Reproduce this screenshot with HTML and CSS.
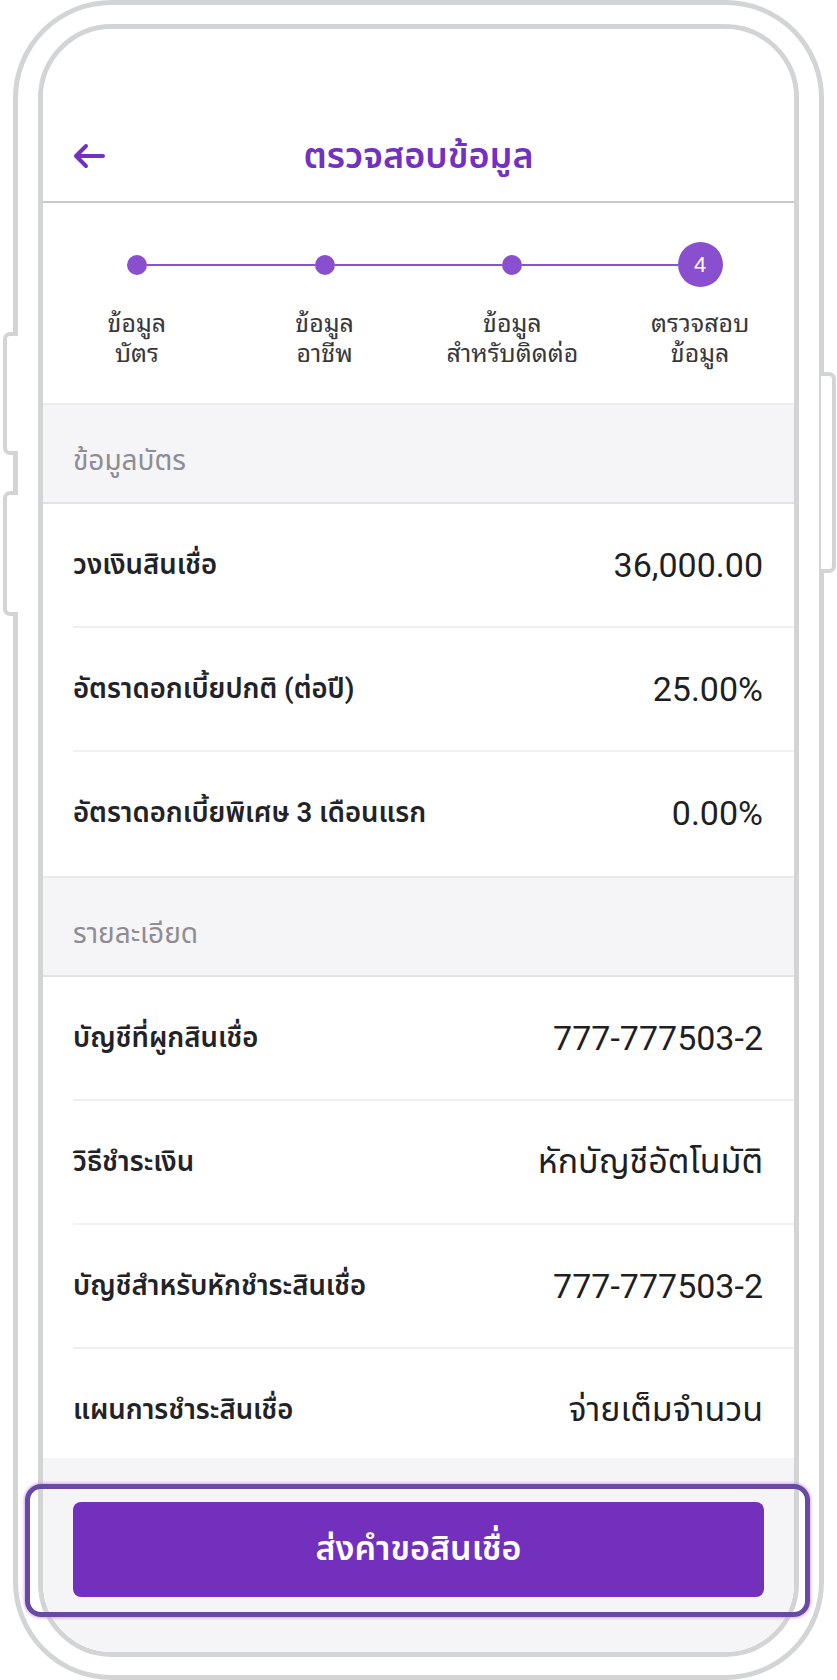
FILE: index.html
```html
<!DOCTYPE html>
<html lang="th">
<head>
    <meta charset="UTF-8">
    <meta name="viewport" content="width=device-width, initial-scale=1.0">
    <title>ตรวจสอบข้อมูล</title>
    <link rel="stylesheet" href="styles.css">
</head>
<body>
    <div class="device">
        <span class="side-btn side-left first"></span>
        <span class="side-btn side-left second"></span>
        <span class="side-btn side-right"></span>

        <div class="frame">
            <div class="screen">
                <div class="content">
                    <div class="status"></div>
                    <div class="nav">
                        <svg class="back" width="34" height="26" viewBox="0 0 34 26">
                            <path d="M31 13 H4 M14 3 L4 13 L14 23" fill="none" stroke="#7331c1" stroke-width="4" stroke-linecap="round" stroke-linejoin="round"/>
                        </svg>
                        <h1 class="title">ตรวจสอบข้อมูล</h1>
                    </div>

                    <div class="stepper">
                        <div class="step first">
                            <div class="marker"><span class="line"></span><span class="dot"></span><span class="line"></span></div>
                            <p class="step-label"><span>ข้อมูล</span><span>บัตร</span></p>
                        </div>
                        <div class="step">
                            <div class="marker"><span class="line"></span><span class="dot"></span><span class="line"></span></div>
                            <p class="step-label"><span>ข้อมูล</span><span>อาชีพ</span></p>
                        </div>
                        <div class="step">
                            <div class="marker"><span class="line"></span><span class="dot"></span><span class="line"></span></div>
                            <p class="step-label"><span>ข้อมูล</span><span>สำหรับติดต่อ</span></p>
                        </div>
                        <div class="step last">
                            <div class="marker"><span class="line"></span><span class="dot current">4</span><span class="line"></span></div>
                            <p class="step-label"><span>ตรวจสอบ</span><span>ข้อมูล</span></p>
                        </div>
                    </div>

                    <div class="group-title">ข้อมูลบัตร</div>
                    <div class="row"><span class="label">วงเงินสินเชื่อ</span><span class="value">36,000.00</span></div>
                    <div class="row"><span class="label">อัตราดอกเบี้ยปกติ (ต่อปี)</span><span class="value">25.00%</span></div>
                    <div class="row last"><span class="label">อัตราดอกเบี้ยพิเศษ 3 เดือนแรก</span><span class="value">0.00%</span></div>

                    <div class="group-title">รายละเอียด</div>
                    <div class="row"><span class="label">บัญชีที่ผูกสินเชื่อ</span><span class="value">777-777503-2</span></div>
                    <div class="row"><span class="label">วิธีชำระเงิน</span><span class="value">หักบัญชีอัตโนมัติ</span></div>
                    <div class="row"><span class="label">บัญชีสำหรับหักชำระสินเชื่อ</span><span class="value">777-777503-2</span></div>
                    <div class="row last"><span class="label">แผนการชำระสินเชื่อ</span><span class="value">จ่ายเต็มจำนวน</span></div>
                </div>

                <div class="footer">
                    <button type="button" class="submit">ส่งคำขอสินเชื่อ</button>
                </div>
            </div>
        </div>

        <div class="highlight"></div>
    </div>
</body>
</html>
```

FILE: styles.css
```css
body {
    margin: 0;
    background: #fff;
    font-family: Roboto, "Noto Sans Thai", "Noto Sans Thai UI", "Sarabun", "Loma", "Garuda", "Liberation Sans", sans-serif;
    color: #222226;
}
.device {
    position: relative;
    box-sizing: border-box;
    margin-left: 13px;
    width: 811px;
    height: 1680px;
    border: 5px solid #d3d4d6;
    border-radius: 98px;
    padding: 19px 0 0 20px;
}
.side-btn {
    position: absolute;
    width: 11px;
    background: #fff;
    border: 4px solid #d3d4d6;
}
.side-left {
    left: -15px;
    border-right: none;
    border-radius: 7px 0 0 7px;
}
.side-left.first { top: 327px; height: 115px; }
.side-left.second { top: 486px; height: 117px; }
.side-right {
    right: -17px;
    top: 367px;
    height: 193px;
    border-left: none;
    border-radius: 0 7px 7px 0;
}
.frame {
    box-sizing: border-box;
    width: 761px;
    height: 1633px;
    border: 5px solid #d3d4d6;
    border-radius: 74px;
    overflow: hidden;
}
.screen {
    display: flex;
    flex-direction: column;
    height: 100%;
    background: #fff;
}
.content {
    flex: 1;
    overflow: hidden;
}
.status { height: 83px; }
.nav {
    display: flex;
    align-items: center;
    justify-content: center;
    position: relative;
    height: 89px;
    border-bottom: 2px solid #c9c8cd;
}
.back {
    position: absolute;
    left: 29px;
    top: 31px;
}
.title {
    margin: 0;
    font-size: 36px;
    font-weight: 600;
    color: #7331c1;
}

/* stepper */
.stepper {
    display: grid;
    grid-template-columns: repeat(4, 1fr);
    padding: 39px 0 37px;
}
.marker {
    display: flex;
    align-items: center;
    height: 45px;
}
.line {
    flex: 1;
    height: 2px;
    background: #8b52cf;
}
.first .line:first-child,
.last .line:last-child { background: transparent; }
.dot {
    width: 20px;
    height: 20px;
    border-radius: 50%;
    background: #8a4fcf;
}
.dot.current {
    width: 45px;
    height: 45px;
    display: flex;
    align-items: center;
    justify-content: center;
    color: #fff;
    font-size: 22px;
    font-family: "Liberation Sans", sans-serif;
}
.step-label {
    display: flex;
    flex-direction: column;
    align-items: center;
    margin: 19px 0 0;
    font-family: "Noto Sans Thai Looped", "Noto Looped Thai", "Loma", "Garuda", "Noto Sans Thai", "Liberation Sans", sans-serif;
    font-size: 25px;
    line-height: 30px;
    color: #38383b;
}

/* groups */
.group-title {
    display: flex;
    align-items: flex-end;
    box-sizing: border-box;
    height: 101px;
    padding: 0 30px 22px;
    background: #f5f4f7;
    border-top: 2px solid #ebebee;
    border-bottom: 2px solid #e2e2e6;
    font-size: 28px;
    line-height: 38px;
    color: #8e8d93;
}
.row {
    display: flex;
    align-items: center;
    justify-content: space-between;
    box-sizing: border-box;
    height: 124px;
    margin-left: 30px;
    padding-right: 31px;
    border-bottom: 2px solid #f0f0f2;
}
.row.last { border-bottom-color: transparent; }
.label {
    font-size: 27.5px;
    font-weight: 600;
    color: #232327;
}
.value {
    font-size: 34px;
    color: #1f1f23;
}

/* footer */
.footer {
    height: 194px;
    box-sizing: border-box;
    padding: 44px 30px 0 30px;
    background: #f5f4f7;
}
.submit {
    display: block;
    width: 100%;
    height: 95px;
    border: none;
    border-radius: 8px;
    background: #7230bc;
    color: #fff;
    font-family: inherit;
    font-size: 34px;
    font-weight: 600;
}
.highlight {
    position: absolute;
    left: 7px;
    top: 1479px;
    width: 775px;
    height: 123px;
    border: 5px solid #674ba1;
    border-radius: 16px;
    box-shadow: 0 0 3px 1px rgba(205, 130, 240, 0.7);
}
```
